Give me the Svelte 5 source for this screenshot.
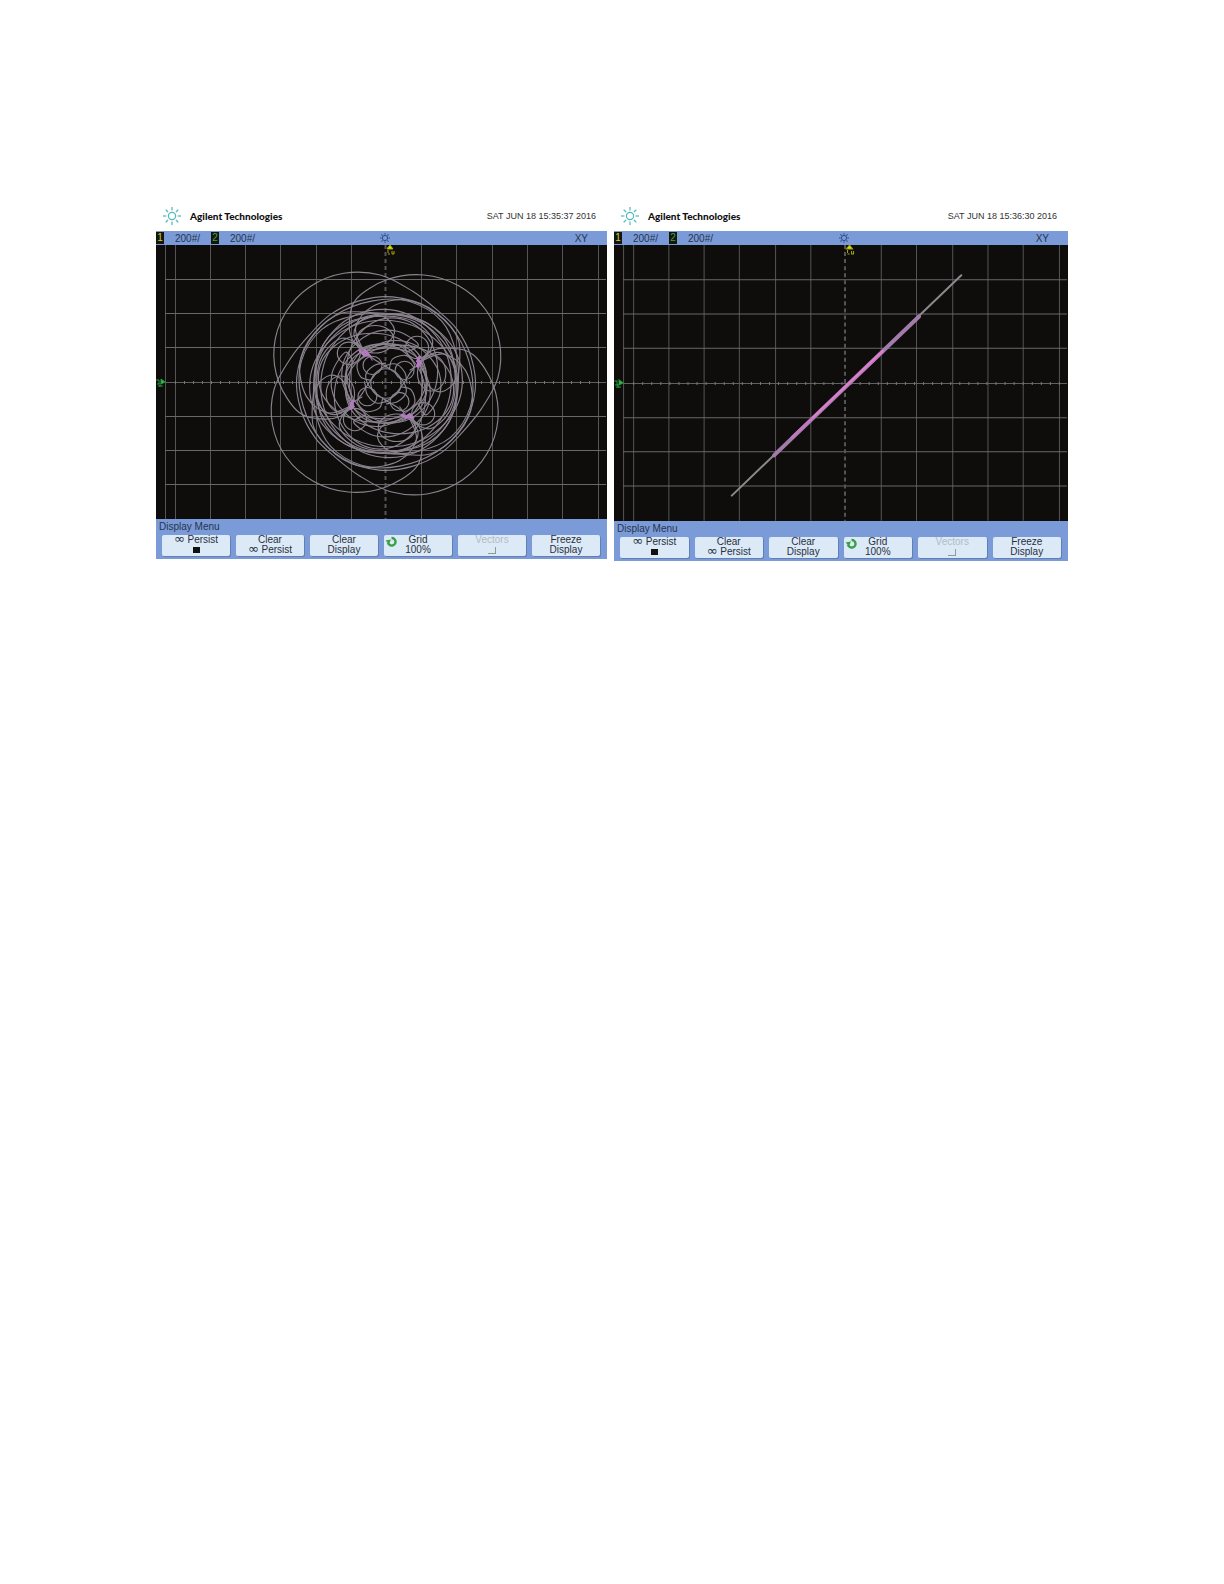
<script>
    const scopes = [
        { time: 'SAT JUN 18 15:35:37 2016', trace: 'rosette' },
        { time: 'SAT JUN 18 15:36:30 2016', trace: 'line' }
    ]

    const columns = [19, 54, 89, 124, 160, 195, 265, 300, 336, 371, 406, 442]
    const rows = [34, 68, 102, 171, 205, 239]
    const rays = [0, 45, 90, 135, 180, 225, 270, 315]
    const quarters = [0, 90, 180, 270]

    // strands of the rosette, measured from its centre
    const strands = [
        [[-97, 65], [-135, 100], [-190, 108], [-259, 87], [-317, -4], [-331, -112], [-298, -215], [-225, -295], [-125, -336],
         [-17, -331], [79, -281], [150, -225], [210, -165], [252, -80], [264, 20], [230, 125], [150, 208], [40, 252], [-70, 250],
         [-165, 190], [-208, 90], [-212, -20], [-185, -120], [-110, -188], [0, -205], [85, -188], [138, -130], [110, -70], [70, -40]],
        [[-65, -97], [-95, -150], [-70, -195], [-10, -205], [25, -165], [5, -125], [-60, -105], [-110, -60], [-120, 10], [-95, 65]],
        [[-65, -97], [-90, -170], [-40, -235], [60, -255], [150, -215], [215, -130], [212, 0]],
        [[-65, -97], [0, -108], [70, -95], [115, -45], [118, 30], [97, 65]],
        [[-65, -97], [10, -130], [90, -115], [150, -50], [160, 30], [120, 95], [97, 65]],
        [[0, -62], [-35, -55], [-60, -25], [-45, 15], [-10, 45], [30, 70], [55, 85], [85, 60], [75, 20], [45, 10]]
    ]

    const smooth = (pts) => {
        let d = `M${pts[0]}`
        for (let i = 0; i < pts.length - 1; i++) {
            const a = pts[i - 1] || pts[i]
            const b = pts[i]
            const c = pts[i + 1]
            const e = pts[i + 2] || c
            d += `C${b[0] + (c[0] - a[0]) / 6} ${b[1] + (c[1] - a[1]) / 6} ${c[0] - (e[0] - b[0]) / 6} ${c[1] - (e[1] - b[1]) / 6} ${c}`
        }
        return d
    }
</script>

<main>
    {#each scopes as scope}
        <section class="scope">
            <header>
                <svg class="logo" viewBox="0 0 20 20" aria-hidden="true">
                    <circle cx="10" cy="10" r="3.6" />
                    {#each rays as r}
                        <path d="M10 1V4.4" transform="rotate({r} 10 10)" />
                    {/each}
                </svg>
                <strong>Agilent Technologies</strong>
                <time>{scope.time}</time>
            </header>

            <div class="status">
                <span class="channel one">1</span>
                <span class="volts">200#/</span>
                <span class="channel two">2</span>
                <span class="volts">200#/</span>
                <svg class="sun" viewBox="0 0 12 12" aria-hidden="true">
                    <circle cx="6" cy="6" r="2.6" />
                    {#each rays as r}
                        <path d="M6 1V2.6" transform="rotate({r} 6 6)" />
                    {/each}
                </svg>
                <span class="mode">XY</span>
            </div>

            <svg class="plot" viewBox="0 0 451 274" role="img" aria-label="XY trace">
                <g class="columns">
                    <path d="M9.5 0V274" />
                    {#each columns as x}
                        <path d="M{x + 0.5} 0V274" />
                    {/each}
                </g>
                <g class="rows">
                    {#each rows as y}
                        <path d="M9 {y + 0.5}H450" />
                    {/each}
                    <path class="axis" d="M9 137.5H450" />
                </g>
                <path class="ticks" d="M229.5 0V274" />
                <path class="ticks wide" d="M19 137.5H450" />

                {#if scope.trace === 'rosette'}
                    <g class="rosette" transform="translate(230 138.5) scale(0.338 0.328)">
                        {#each quarters as q}
                            <g transform="rotate({q})">
                                {#each strands as s}
                                    <path d={smooth(s)} />
                                {/each}
                                <ellipse cx="-8" cy="10" rx="218" ry="203" />
                                <ellipse cx="-135" cy="32" rx="42" ry="55" />
                                <ellipse cx="-18" cy="40" rx="135" ry="160" />
                                <circle cx="-55" cy="40" r="28" />
                                <circle cx="110" cy="92" r="34" />
                            </g>
                        {/each}
                        <circle r="45" />
                        <g class="knots">
                            <path d="M-80 -103L-68 -90L-62 -100L-50 -86L-66 -88" />
                            <path d="M101 -84L93 -68L102 -62L92 -50L99 -72" />
                            <path d="M-96 50L-104 62L-97 70L-106 78L-99 60" />
                            <path d="M45 94L60 104L70 94L82 106L63 98" />
                        </g>
                    </g>
                {:else}
                    <path class="diagonal faint" d="M117 249L345 30" />
                    <path class="diagonal wide" d="M159 209L303 71" />
                    <path class="diagonal hot" d="M177 191L267 106" />
                    <path class="diagonal core" d="M198 171L267 105" />
                {/if}

                <path class="trigger" d="M231 3H234M232 5V8M236 6V9H238V6M232 9H234" />
                <path class="trigger fill" d="M231 4L234 0L237 4Z" />
                <path class="ground" d="M0 135H3V139H1M4 138V142M2 141H7" />
                <path class="ground fill" d="M5 134L9 137L5 139Z" />
            </svg>

            <div class="menu">
                <h2>Display Menu</h2>
                <div class="keys">
                    <button><span><i>∞</i> Persist</span><span class="box on"></span></button>
                    <button><span>Clear</span><span><i>∞</i> Persist</span></button>
                    <button><span>Clear</span><span>Display</span></button>
                    <button>
                        <svg class="knob" viewBox="0 0 12 12" aria-hidden="true">
                            <path class="arc" d="M6 2A3.8 3.8 0 1 1 2.5 6.5" />
                            <path class="head" d="M0 4.5L5.5 3.5L3.5 8Z" />
                        </svg>
                        <span>Grid</span><span>100%</span>
                    </button>
                    <button disabled><span>Vectors</span><span class="box off"></span></button>
                    <button><span>Freeze</span><span>Display</span></button>
                </div>
            </div>
        </section>
    {/each}
</main>

<style>
    :global(body) {
        margin: 0;
        background: #fff;
    }

    main {
        display: grid;
        grid-template-columns: 451fr 454fr;
        align-items: start;
        gap: 7px;
        padding: 205px 156px;
        font-family: "Liberation Sans", sans-serif;
        font-size: 10px;
        line-height: 11px;
        color: #26344f;
    }

    header {
        display: flex;
        align-items: center;
        height: 26px;
        padding: 0 11px 4px 6px;
        box-sizing: border-box;
        color: #333;
    }

    header strong {
        margin-left: 8px;
        font-family: Lato, sans-serif;
        font-weight: 900;
        color: #111;
    }

    header time {
        margin-left: auto;
        font-size: 9px;
    }

    .logo {
        width: 20px;
        height: 20px;
        fill: none;
        stroke: #4fb9bb;
        stroke-width: 1.2;
    }

    .status {
        display: grid;
        grid-template-columns: 8px 47px 8px 160fr 12px 216fr;
        align-items: center;
        height: 14px;
        background: #7b9bd8;
    }

    .channel {
        background: #14160c;
        text-align: center;
        line-height: 12px;
    }

    .one {
        color: #d2ca45;
    }

    .two {
        color: #3ba648;
    }

    .volts {
        padding-left: 11px;
    }

    .sun {
        width: 12px;
        height: 12px;
        fill: none;
        stroke: #304c83;
    }

    .mode {
        justify-self: end;
        padding-right: 19px;
    }

    .plot {
        display: block;
        width: 100%;
        background: #0e0d0c;
        fill: none;
    }

    .columns {
        stroke: #555;
    }

    .rows {
        stroke: #686868;
    }

    .axis {
        stroke: #606060;
    }

    .ticks {
        stroke: #555;
        stroke-width: 2;
        stroke-dasharray: 4 3;
    }

    .ticks.wide {
        stroke: #777;
        stroke-width: 3;
        stroke-dasharray: 1 8;
    }

    .rosette {
        stroke: #8b838e;
        stroke-width: 3.4;
    }

    .knots {
        stroke: #b27bc0;
        stroke-width: 8;
    }

    .diagonal {
        stroke-linecap: round;
    }

    .faint {
        stroke: #8d8790;
        stroke-width: 2;
    }

    .diagonal.wide {
        stroke: #a17ba9;
        stroke-width: 4;
    }

    .hot {
        stroke: #c077c0;
        stroke-width: 3;
    }

    .core {
        stroke: #dc7fcc;
        stroke-width: 2;
    }

    .trigger {
        stroke: #a5a511;
    }

    .trigger.fill {
        fill: #d8dc12;
    }

    .ground {
        stroke: #249a3a;
    }

    .ground.fill {
        fill: #35c24e;
    }

    .menu {
        padding: 2px 7px 3px 6px;
        background: #7b9bd8;
    }

    h2 {
        margin: 0 0 3px -3px;
        font-size: 10px;
        font-weight: 400;
        line-height: 11px;
    }

    .keys {
        display: grid;
        grid-template-columns: repeat(6, 1fr);
        gap: 6px;
    }

    button {
        display: flex;
        flex-direction: column;
        align-items: center;
        position: relative;
        height: 21px;
        padding: 0;
        border: 0;
        border-radius: 2px;
        background: #dce9f7;
        box-shadow: 1px 1px 0 #627eb2;
        color: #27303e;
        font: inherit;
        line-height: 10px;
        white-space: nowrap;
    }

    button:disabled {
        color: #b3bcbf;
    }

    button span {
        height: 10px;
    }

    i {
        font-family: "DejaVu Sans", sans-serif;
        font-size: 13px;
        font-style: normal;
        line-height: 8px;
    }

    button .box {
        width: 7px;
        height: 6px;
        margin-top: 2px;
    }

    .on {
        background: #111;
    }

    .off {
        border: solid #8f9998;
        border-width: 0 1px 1px 0;
    }

    .knob {
        position: absolute;
        left: 1px;
        top: 1px;
        width: 13px;
        height: 12px;
    }

    .arc {
        fill: none;
        stroke: #36a043;
        stroke-width: 2.4;
    }

    .head {
        fill: #36a043;
    }
</style>
